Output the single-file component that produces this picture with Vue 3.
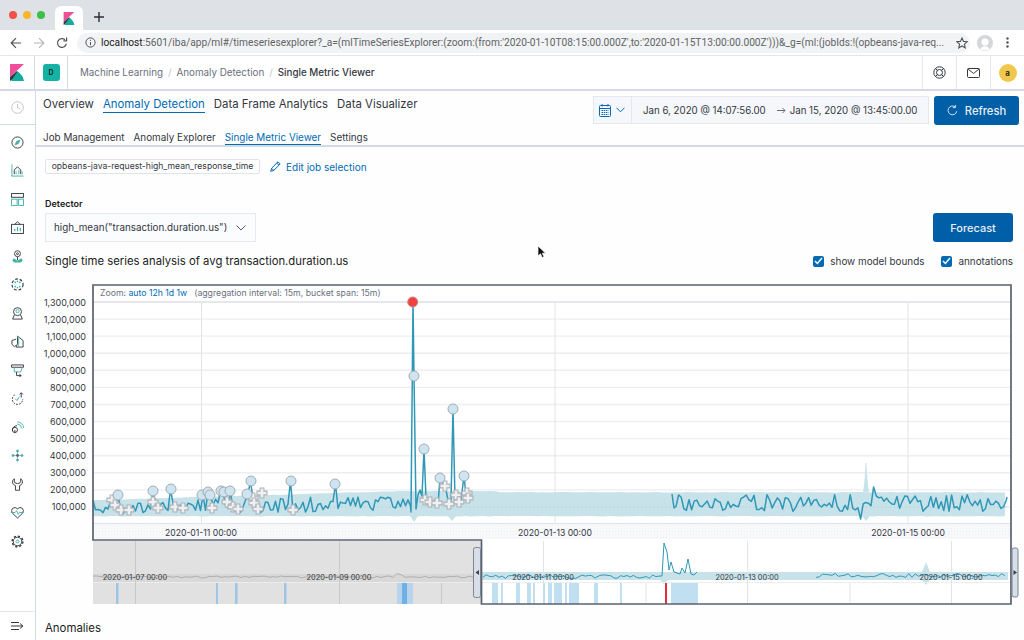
<script setup>
function rng(seed) {
  let s = seed
  return () => {
    s = (s * 16807) % 2147483647
    return s / 2147483647
  }
}
function smooth(pts) {
  return pts.map((p, i) => (i ? 'L' : 'M') + p[0].toFixed(1) + ' ' + p[1].toFixed(1)).join('')
}
const gridY = Array.from({ length: 13 }, (_, i) => 302 + i * 17.08)
const yLabels = ['1,300,000', '1,200,000', '1,100,000', '1,000,000', '900,000', '800,000', '700,000', '600,000', '500,000', '400,000', '300,000', '200,000', '100,000']
  .map((t, i) => ({ t, y: 302 + i * 17.08 + 3.5 }))
const mainDates = [
  { t: '2020-01-11 00:00', x: 201 },
  { t: '2020-01-13 00:00', x: 555 },
  { t: '2020-01-15 00:00', x: 908 }
]
const circles = [[118, 495], [153, 491], [171, 489], [202, 495], [208, 492], [210, 495], [221, 491], [224, 492], [230, 491], [247, 494], [251, 481], [291, 481], [335, 484], [414, 376], [424, 449], [440, 478], [453, 409], [464, 476]]
const crosses = [[112, 500], [115, 505], [121, 510], [129, 510], [153, 502], [158, 508], [175, 507], [183, 508], [212, 508], [227, 502], [233, 507], [238, 509], [253, 498], [262, 493], [254, 503], [258, 509], [293, 510], [425, 500], [430, 502], [437, 503], [445, 486], [449, 504], [456, 495], [459, 502], [467, 493], [468, 498]]

const r1 = rng(4711)
const leftPts = []
for (let x = 93; x < 411; x += 2.5) {
  const hit = circles.find(c => Math.abs(c[0] - x) < 1.3)
  const base = 508 - (x - 93) * 0.012
  leftPts.push([x, hit ? hit[1] : base + (r1() - 0.55) * 15])
}
leftPts.push([411, 512], [413, 302], [414, 376], [416, 509], [418, 495], [420, 490], [422, 496], [424, 449], [426, 498], [428, 502], [431, 500], [435, 505], [438, 505], [440, 478], [443, 484], [446, 490], [449, 505], [451, 500], [453, 409], [455, 500], [458, 497], [461, 500], [464, 476], [466, 495], [471, 498])
const leftLine = smooth(leftPts)

const r2 = rng(90210)
const rightPts = [[672, 494], [674, 508]]
for (let x = 676; x < 1007; x += 2.6) {
  rightPts.push([x, 503 + (r2() - 0.5) * 17])
}
rightPts[Math.floor((866 - 676) / 2.6)][1] = 519
rightPts[Math.floor((880 - 676) / 2.6)][1] = 487
rightPts.push([1007, 497])
const rightLine = smooth(rightPts)

const bandTop = []
const bandBot = []
const r3 = rng(333)
for (let x = 93; x <= 1008; x += 6) {
  const t = x < 400 ? 500 - (x - 93) * 0.03 : x < 500 ? 491 : 492
  bandTop.push([x, t + r3() * 0.5])
  bandBot.push([x, 516 + r3() * 0.4])
}
const band = smooth(bandTop) + bandBot.reverse().map(p => 'L' + p[0] + ' ' + p[1].toFixed(1)).join('') + 'Z'

const r4 = rng(555)
const ctxLeft = []
for (let x = 93; x < 474; x += 4) {
  ctxLeft.push([x, (x > 396 && x < 404 ? 574 : 577) + (r4() - 0.5) * 2])
}
const ctxLeftLine = smooth(ctxLeft)
const ctxA = []
for (let x = 483; x < 660; x += 3.2) ctxA.push([x, 576.5 + (r4() - 0.5) * 4])
ctxA.push([662, 576], [664, 543], [667, 552], [669, 570], [671, 562], [674, 572], [680, 574], [682, 568], [685, 573], [688, 559], [691, 574], [694, 575], [697, 572])
const ctxALine = smooth(ctxA)
const ctxB = []
for (let x = 816; x < 1008; x += 3.2) ctxB.push([x, 575.5 + (r4() - 0.5) * 4])
const ctxBLine = smooth(ctxB)

const greyBars = [[116, 2.5], [216, 2], [235, 2.5], [284, 2.5]]
const blueBars = [[492, 6], [501, 2], [516, 4], [527, 4], [533, 2], [543, 2], [548, 4], [554, 8], [565, 2], [569, 10], [594, 4], [620, 2], [671, 27]]

const crossPath = 'M-1.9 -5H1.9V-1.9H5V1.9H1.9V5H-1.9V1.9H-5V-1.9H-1.9Z'
</script>

<template>
  <div class="screen">
    <div class="tabstrip">
      <div class="lights"><i class="red"></i><i class="amber"></i><i class="green"></i></div>
      <div class="tab">
        <svg width="12" height="13" viewBox="0 0 14 17">
          <polygon points="0,0 14,0 0,13" fill="#f04e98" />
          <polygon points="0,17 0,13 7,7 10,10" fill="#343741" />
          <path d="M1 17H14Q13 11 7.5 7.5Z" fill="#13ada0" />
        </svg>
      </div>
      <svg class="plus" width="10" height="10" viewBox="0 0 10 10"><path d="M5 0V10M0 5H10" stroke="#2b2e33" stroke-width="1.4" /></svg>
    </div>

    <div class="urlbar">
      <svg class="nav-ic" width="12" height="12" viewBox="0 0 12 12" fill="none" stroke="#50545a" stroke-width="1.2"><path d="M11 6H1.5M6 1.2 1.2 6 6 10.8" /></svg>
      <svg class="nav-ic" width="12" height="12" viewBox="0 0 12 12" fill="none" stroke="#b4b7bb" stroke-width="1.2"><path d="M1 6H10.5M6 1.2 10.8 6 6 10.8" /></svg>
      <svg class="nav-ic" width="12" height="12" viewBox="0 0 12 12" fill="none" stroke="#50545a" stroke-width="1.2"><path d="M10.3 6.6A4.4 4.4 0 1 1 9 2.8" /><path d="M10.6 .6V3.8H7.4" /></svg>
      <div class="pill">
        <svg width="11" height="11" viewBox="0 0 11 11" fill="none" stroke="#50545a"><circle cx="5.5" cy="5.5" r="4.6" /><path d="M5.5 5V8.2M5.5 2.8V3.9" /></svg>
        <span class="url"><b>localhost</b>:5601/iba/app/ml#/timeseriesexplorer?_a=(mlTimeSeriesExplorer:(zoom:(from:'2020-01-10T08:15:00.000Z',to:'2020-01-15T13:00:00.000Z')))&amp;_g=(ml:(jobIds:!(opbeans-java-req...</span>
        <svg class="star" width="12" height="12" viewBox="0 0 12 12" fill="none" stroke="#50545a" stroke-width="1.1"><path d="M6 1 7.5 4.4 11.2 4.8 8.4 7.2 9.2 10.9 6 9 2.8 10.9 3.6 7.2 .8 4.8 4.5 4.4Z" /></svg>
      </div>
      <svg class="profile" width="16" height="16" viewBox="0 0 16 16"><circle cx="8" cy="8" r="8" fill="#d5d7da" /><circle cx="8" cy="7" r="3.6" fill="#fff" /><path d="M3 14Q8 8 13 14Q8 17 3 14Z" fill="#fff" /></svg>
      <svg class="kebab" width="3" height="11" viewBox="0 0 3 11"><circle cx="1.5" cy="1.5" r="1.2" fill="#50545a" /><circle cx="1.5" cy="5.5" r="1.2" fill="#50545a" /><circle cx="1.5" cy="9.5" r="1.2" fill="#50545a" /></svg>
    </div>

    <header class="kbn">
      <div class="kbn-logo">
        <svg width="14" height="17" viewBox="0 0 14 17">
          <polygon points="0,0 14,0 0,13" fill="#f04e98" />
          <polygon points="0,17 0,13 7,7 10,10" fill="#343741" />
          <path d="M1 17H14Q13 11 7.5 7.5Z" fill="#13ada0" />
        </svg>
      </div>
      <div class="kbn-space"><span class="space-badge">D</span></div>
      <nav class="crumbs">
        <span>Machine Learning</span><em>/</em><span>Anomaly Detection</span><em>/</em><strong>Single Metric Viewer</strong>
      </nav>
      <div class="kbn-ic">
        <svg width="13" height="13" viewBox="0 0 13 13" fill="none" stroke="#343741"><circle cx="6.5" cy="6.5" r="5.7" /><circle cx="6.5" cy="6.5" r="3" /><path d="M2.4 2.4 4.4 4.4M10.6 2.4 8.6 4.4M2.4 10.6 4.4 8.6M10.6 10.6 8.6 8.6" /></svg>
      </div>
      <div class="kbn-ic">
        <svg width="13" height="10" viewBox="0 0 13 10" fill="none" stroke="#343741"><rect x=".5" y=".5" width="12" height="9" rx="1" /><path d="M1 1 6.5 5.5 12 1" /></svg>
      </div>
      <div class="kbn-ic"><span class="avatar">a</span></div>
    </header>

    <div class="body">
      <aside class="side">
        <div class="side-top">
          <svg width="13" height="13" viewBox="0 0 13 13" fill="none" stroke="#c2c6cc"><circle cx="6.5" cy="6.5" r="5.8" /><path d="M6.5 3V6.8L9 7.6" /></svg>
        </div>
        <div class="side-list">
          <span class="sic"><svg viewBox="0 0 14 14" fill="none" stroke="#343741" stroke-width="1"><circle cx="7" cy="7" r="6" /><path d="M4.5 9.5 6 6 9.5 4.5 8 8Z" stroke="#3fb2a8" fill="#3fb2a8" /></svg></span>
          <span class="sic"><svg viewBox="0 0 14 14" fill="none" stroke="#343741" stroke-width="1"><path d="M1 .5V13" stroke="#3fb2a8" /><path d="M.5 13H13.5" stroke="#3fb2a8" /><path d="M3.5 11V6.5L7 3 10.5 6.5V11" /><path d="M5.5 11V8M8.5 11V6.5M12 11V8" stroke="#3fb2a8" /></svg></span>
          <span class="sic"><svg viewBox="0 0 14 14" fill="none" stroke="#343741" stroke-width="1"><rect x=".6" y=".6" width="12.8" height="4" /><rect x=".6" y="6.6" width="6" height="6.8" stroke="#3fb2a8" /><rect x="8.2" y="6.6" width="5.2" height="6.8" stroke="#3fb2a8" /></svg></span>
          <span class="sic"><svg viewBox="0 0 14 14" fill="none" stroke="#343741" stroke-width="1"><rect x=".6" y="3.6" width="12.8" height="9.8" /><path d="M4 3.6 7 .8 10 3.6" /><path d="M4 11V8.5M7 11V6.5M10 11V7.5" stroke="#3fb2a8" stroke-width="1.3" /></svg></span>
          <span class="sic"><svg viewBox="0 0 14 14" fill="none" stroke="#343741" stroke-width="1"><circle cx="7" cy="4" r="3.2" /><circle cx="7" cy="4" r="1" /><path d="M7 7.4V11" /><path d="M3 9.5Q.5 12 4 13H10Q13.5 12 11 9.5L7 12Z" stroke="#3fb2a8" fill="#3fb2a8" /></svg></span>
          <span class="sic"><svg viewBox="0 0 14 14" fill="none" stroke="#343741" stroke-width="1.2"><circle cx="7" cy="7" r="6" stroke-dasharray="3 2" /><path d="M4.5 4.8H4.6M9.4 4.8H9.5M7 3.5V3.6M7 10.4V10.5M4.5 9.2H4.6M9.4 9.2H9.5" stroke="#3fb2a8" stroke-width="1.8" stroke-linecap="round" /></svg></span>
          <span class="sic"><svg viewBox="0 0 14 14" fill="none" stroke="#343741" stroke-width="1"><circle cx="7" cy="5" r="4.3" /><circle cx="7" cy="4.5" r="1.7" stroke="#3fb2a8" /><path d="M1.8 13H12.2L10.4 8.6M3.6 8.6 1.8 13" /></svg></span>
          <span class="sic"><svg viewBox="0 0 14 14" fill="none" stroke="#343741" stroke-width="1"><path d="M7 1.2 13 6V13H5.2L7 9.5Z" /><path d="M7 1.5C8.5 4 9 9 7.5 13" stroke="#3fb2a8" /><path d="M5.5 4.5 1 6V10L3.5 12.5 5 11" /></svg></span>
          <span class="sic"><svg viewBox="0 0 14 14" fill="none" stroke="#343741" stroke-width="1"><path d="M.6 1H13.4V3.5H.6Z" /><path d="M3.5 4V8.5H10.5L12 4" stroke="#3fb2a8" /><path d="M6 8.5V12.5H11" stroke="#343741" /><path d="M9 11 11 12.5 9 13.8" /></svg></span>
          <span class="sic"><svg viewBox="0 0 14 14" fill="none" stroke="#343741" stroke-width="1"><path d="M4 3A5.6 5.6 0 1 0 12.6 7.5" stroke-dasharray="2 1.2" /><path d="M4.4 7.2 6.4 9.2 9 5" stroke="#3fb2a8" /><path d="M11 6V1M9.2 2.6 11 .8 12.8 2.6" /></svg></span>
          <span class="sic"><svg viewBox="0 0 14 14" fill="none" stroke="#343741" stroke-width="1"><circle cx="4.2" cy="9.6" r="2.8" /><path d="M1.5 10A5 5 0 0 1 6.5 5M4.2 9.6V13" /><path d="M6.5 3A6 6 0 0 1 11.5 8M7 .8A8 8 0 0 1 13.6 7.5" stroke="#3fb2a8" /></svg></span>
          <span class="sic"><svg viewBox="0 0 14 14" fill="none" stroke="#3fb2a8" stroke-width=".8"><path d="M7 1V13M1 7H13" stroke="#6b7280" stroke-width=".6" /><circle cx="7" cy="2.2" r="1.1" fill="#3fb2a8" /><circle cx="7" cy="11.8" r="1.1" fill="#3fb2a8" /><circle cx="2.2" cy="7" r="1.1" fill="#3fb2a8" /><circle cx="11.8" cy="7" r="1.1" fill="#3fb2a8" /><circle cx="7" cy="7" r="1.5" fill="#5a606c" stroke="none" /></svg></span>
          <span class="sic"><svg viewBox="0 0 14 14" fill="none" stroke="#343741" stroke-width="1"><path d="M3.6 .8V3.5Q3.6 6 7 6T10.4 3.5V.8Q13 2.5 12.2 5.5 11.4 7.6 9.2 8.2V13.2H4.8V8.2Q2.6 7.6 1.8 5.5 1 2.5 3.6 .8Z" /></svg></span>
          <span class="sic"><svg viewBox="0 0 14 14" fill="none" stroke="#343741" stroke-width="1"><path d="M7 13 1.8 8Q-.5 5 1.6 2.6 4.5 .3 7 3 9.5 .3 12.4 2.6 14.5 5 12.2 8Z" /><path d="M0 7H4.5L6 5 7.8 9 9.2 7H14" stroke="#3fb2a8" /></svg></span>
          <span class="sic"><svg viewBox="0 0 14 14" fill="none" stroke="#343741"><circle cx="7" cy="7" r="4.6" stroke-width="1" /><circle cx="7" cy="7" r="5.8" stroke-width="1.5" stroke-dasharray="2.4 2.1" /><circle cx="7" cy="7" r="1.6" stroke="#3fb2a8" stroke-width="1" /></svg></span>
        </div>
        <div class="side-end">
          <svg width="13" height="10" viewBox="0 0 13 10" fill="none" stroke="#343741"><path d="M0 1.5H8M0 5H11.5M0 8.5H8M9 2.5 12 5 9 7.5" /></svg>
        </div>
      </aside>

      <main class="main">
        <div class="toprow">
          <div class="tabs">
            <a>Overview</a><a class="on">Anomaly Detection</a><a>Data Frame Analytics</a><a>Data Visualizer</a>
          </div>
          <div class="dates">
            <div class="date-quick">
              <svg width="12" height="13" viewBox="0 0 12 13" fill="none" stroke="#006bb4"><rect x=".5" y="1.5" width="11" height="11" rx="1" /><path d="M.5 4.5H11.5M3 0V2.5M9 0V2.5" /><path d="M2.5 6.5H9.5M2.5 8.5H9.5M2.5 10.5H9.5" stroke-dasharray="1.5 .7" /></svg>
              <svg width="9" height="6" viewBox="0 0 9 6" fill="none" stroke="#006bb4"><path d="M.5 .8 4.5 4.8 8.5 .8" /></svg>
            </div>
            <div class="date-range">
              <span>Jan 6, 2020 @ 14:07:56.00</span>
              <svg class="date-arrow" width="9" height="7" viewBox="0 0 9 7" fill="none" stroke="#69707d"><path d="M0 3.5H8M5.5 1 8 3.5 5.5 6" /></svg>
              <span>Jan 15, 2020 @ 13:45:00.00</span>
            </div>
          </div>
          <button class="refresh">
            <svg width="11" height="11" viewBox="0 0 11 11" fill="none" stroke="#d5e3f0"><path d="M9.8 6.2A4.4 4.4 0 1 1 8 1.8" /><path d="M8.4 0V2.6H5.8" /></svg>
            Refresh
          </button>
        </div>

        <div class="subtabs">
          <a>Job Management</a><a>Anomaly Explorer</a><a class="on">Single Metric Viewer</a><a>Settings</a>
        </div>

        <div class="jobrow">
          <span class="job">opbeans-java-request-high_mean_response_time</span>
          <a class="edit">
            <svg width="11" height="11" viewBox="0 0 11 11" fill="none" stroke="#006bb4"><path d="M.7 10.3 1.6 7.2 8 .8 10.2 3 3.8 9.4ZM1.6 7.2 3.8 9.4M6.8 2 9 4.2" /></svg>
            Edit job selection
          </a>
        </div>

        <div class="formrow">
          <div>
            <label class="lbl">Detector</label>
            <div class="select">
              <span>high_mean("transaction.duration.us")</span>
              <svg width="10" height="6" viewBox="0 0 10 6" fill="none" stroke="#535966"><path d="M.5 .5 5 5 9.5 .5" /></svg>
            </div>
          </div>
          <button class="forecast">Forecast</button>
        </div>

        <div class="titlerow">
          <h2>Single time series analysis of avg transaction.duration.us</h2>
          <label class="chk"><i><svg width="9" height="8" viewBox="0 0 9 8" fill="none" stroke="#fff" stroke-width="1.4"><path d="M1 4 3.4 6.4 8 1" /></svg></i>show model bounds</label>
          <label class="chk"><i><svg width="9" height="8" viewBox="0 0 9 8" fill="none" stroke="#fff" stroke-width="1.4"><path d="M1 4 3.4 6.4 8 1" /></svg></i>annotations</label>
        </div>

        <svg class="chart" width="988" height="326" viewBox="36 284 988 326">
          <defs>
            <pattern id="dots" width="3" height="3" patternUnits="userSpaceOnUse">
              <rect width="3" height="3" fill="#f8f9fb" />
              <rect width="1" height="1" fill="#eceef3" />
            </pattern>
          </defs>
          <rect x="93" y="285" width="918" height="238" fill="#fff" />
          <g stroke="#eceef1" stroke-width="1.4">
            <line v-for="y in gridY" :key="y" x1="93" x2="1011" :y1="y" :y2="y" />
          </g>
          <line x1="93" x2="1011" y1="302" y2="302" stroke="#d9dde3" />
          <g stroke="#e1e4e9">
            <line x1="201.5" x2="201.5" y1="302" y2="523" />
            <line x1="555" x2="555" y1="302" y2="523" />
            <line x1="908" x2="908" y1="302" y2="523" />
          </g>
          <path :d="band" fill="#c8e2ea" />
          <path d="M863 492Q865 480 865.5 463H866.5Q867 480 869 492ZM862 516 866 521 870 516ZM410 516 414 522 418 516ZM448 516 452 521 456 516Z" fill="#c8e2ea" />
          <line x1="93" x2="1008" y1="507" y2="507" stroke="#b6d3dc" stroke-dasharray="2 2" stroke-width=".8" />
          <rect x="93" y="523" width="918" height="16" fill="url(#dots)" />
          <line x1="93" x2="1011" y1="523.5" y2="523.5" stroke="#dfe3e9" />

          <g class="axis">
            <text v-for="l in yLabels" :key="l.t" x="86" :y="l.y" text-anchor="end">{{ l.t }}</text>
          </g>
          <text class="zoomtxt" x="100" y="295.5">Zoom: <tspan class="lnk">auto 12h 1d 1w</tspan><tspan dx="7">(aggregation interval: 15m, bucket span: 15m)</tspan></text>
          <g class="axis2">
            <text v-for="d in mainDates" :key="d.t" :x="d.x" y="536" text-anchor="middle">{{ d.t }}</text>
          </g>

          <path :d="leftLine" fill="none" stroke="#3098b7" stroke-width="1.5" stroke-linejoin="round" />
          <path :d="rightLine" fill="none" stroke="#3098b7" stroke-width="1.5" stroke-linejoin="round" />

          <g>
            <path v-for="(c, i) in crosses" :key="i" :d="crossPath" :transform="`translate(${c[0]} ${c[1]})`" fill="#eff0f2" stroke="#aeb2b8" stroke-width="1.1" />
            <circle v-for="(c, i) in circles" :key="'c' + i" :cx="c[0]" :cy="c[1]" r="5" fill="#cde4f1" stroke="#a6abb2" stroke-width="1" />
            <circle cx="412.7" cy="302" r="5" fill="#f4403f" stroke="#bf8b8c" />
          </g>

          <!-- context chart -->
          <rect x="93" y="541" width="388" height="63" fill="#e1e1e1" />
          <rect x="93" y="574" width="381" height="8" fill="#d8d8d8" />
          <rect x="482" y="541" width="529" height="63" fill="#fff" />
          <rect x="482" y="572" width="526" height="8" fill="#c8e2ea" />
          <path d="M922 572 926 562 930 572ZM922 580 926 585 930 580ZM660 580 664 584 668 580Z" fill="#c8e2ea" />
          <line x1="482" x2="1011" y1="582.5" y2="582.5" stroke="#eceef1" />
          <line x1="93" x2="474" y1="582.5" y2="582.5" stroke="#ececec" />
          <g stroke="#c9c9c9">
            <line x1="135.5" x2="135.5" y1="541" y2="604" />
            <line x1="339.5" x2="339.5" y1="541" y2="604" />
            <line x1="441.5" x2="441.5" y1="583" y2="604" />
          </g>
          <g stroke="#e1e4e9">
            <line x1="543.5" x2="543.5" y1="541" y2="604" />
            <line x1="747.5" x2="747.5" y1="541" y2="604" />
            <line x1="951.5" x2="951.5" y1="541" y2="604" />
            <line x1="646" x2="646" y1="583" y2="604" />
            <line x1="850" x2="850" y1="583" y2="604" />
          </g>
          <rect v-for="b in blueBars" :key="b[0]" :x="b[0]" y="583" :width="b[1]" height="21" fill="#c0dff0" />
          <rect x="665" y="583" width="2" height="21" fill="#e0323c" />
          <rect v-for="b in greyBars" :key="'g' + b[0]" :x="b[0]" y="583" :width="b[1]" height="21" fill="#9cc5e6" />
          <rect x="397" y="583" width="16" height="21" fill="#b8d4ec" />
          <rect x="402" y="583" width="5" height="21" fill="#6fb0e6" />
          <path :d="ctxLeftLine" fill="none" stroke="#a9a9a9" stroke-width=".9" />
          <path :d="ctxALine" fill="none" stroke="#3098b7" stroke-width="1" />
          <path :d="ctxBLine" fill="none" stroke="#3098b7" stroke-width="1" />
          <g class="axis3">
            <text x="135" y="580" text-anchor="middle">2020-01-07 00:00</text>
            <text x="339" y="580" text-anchor="middle">2020-01-09 00:00</text>
            <text x="543" y="580" text-anchor="middle">2020-01-11 00:00</text>
            <text x="747" y="580" text-anchor="middle">2020-01-13 00:00</text>
            <text x="951" y="580" text-anchor="middle">2020-01-15 00:00</text>
          </g>

          <path d="M93 285H1011V604H481.5V540H93Z" fill="none" stroke="#5a6170" stroke-width="1.7" />

          <g fill="#d8dee8" stroke="#7d8594">
            <rect x="473.5" y="547.5" width="7" height="50" rx="2" />
            <rect x="1012" y="548" width="6" height="49" rx="2" />
          </g>
          <path d="M479 570V575L475.5 572.5Z" fill="#3a3f4a" />
          <path d="M1013.5 570V575L1017 572.5Z" fill="#3a3f4a" />
        </svg>

        <h3 class="anom">Anomalies</h3>
      </main>
    </div>

    <svg class="cursor" width="10" height="14" viewBox="0 0 10 14"><path d="M1 1V11L3.5 8.8 5.2 12.6 7 11.8 5.3 8.2H8.6Z" fill="#111" stroke="#fff" stroke-width=".7" /></svg>
  </div>
</template>

<style>
html, body { margin: 0; background: #fff; }
</style>

<style scoped>
.screen {
  position: relative;
  width: 1024px;
  height: 640px;
  overflow: hidden;
  display: flex;
  flex-direction: column;
  background: #fefefe;
  font-family: Inter, "Liberation Sans", sans-serif;
  color: #343741;
}
.tabstrip {
  height: 30px;
  flex: none;
  display: flex;
  align-items: flex-end;
  background: #dee1e6;
  box-sizing: border-box;
}
.lights { display: flex; gap: 6px; padding: 0 0 11px 9px; width: 55px; box-sizing: border-box; }
.lights i { width: 8px; height: 8px; border-radius: 50%; flex: none; }
.red { background: #f4504c; }
.amber { background: #f8b52e; }
.green { background: #3cc048; }
.tab {
  width: 28px;
  height: 24px;
  background: #fff;
  border-radius: 6px 6px 0 0;
  display: flex;
  align-items: center;
  justify-content: center;
}
.plus { margin: 0 0 8px 11px; }
.urlbar {
  height: 25px;
  flex: none;
  display: flex;
  align-items: center;
  background: #fff;
  border-bottom: 1px solid #e4e6ea;
  padding-left: 10px;
  gap: 11px;
}
.nav-ic { flex: none; }
.pill {
  width: 893px;
  height: 20px;
  margin-left: -2px;
  flex: none;
  border-radius: 10px;
  background: #f1f3f4;
  display: flex;
  align-items: center;
  padding-left: 8px;
  box-sizing: border-box;
  gap: 5px;
}
.url {
  font: 10.2px Roboto, "Liberation Sans", sans-serif;
  color: #5f6368;
  white-space: nowrap;
  width: 846px;
  flex: none;
}
.url b { font-weight: 400; color: #202124; }
.star { flex: none; margin-left: 4px; }
.profile { margin-left: -4px; flex: none; }
.kebab { margin-left: 2px; flex: none; }
.kbn {
  height: 33px;
  flex: none;
  display: flex;
  background: #fff;
  border-bottom: 2px solid #d3dae6;
}
.kbn-logo { width: 34px; border-right: 1px solid #d3dae6; display: flex; align-items: center; justify-content: center; }
.kbn-space { width: 32px; border-right: 1px solid #d3dae6; display: flex; align-items: center; justify-content: center; }
.space-badge {
  width: 17px;
  height: 17px;
  border-radius: 3px;
  background: #14b2a4;
  color: #1a1c21;
  font-size: 7px;
  font-weight: 600;
  display: flex;
  align-items: center;
  justify-content: center;
}
.crumbs {
  flex: 1;
  display: flex;
  align-items: center;
  gap: 5px;
  padding-left: 12px;
  font-size: 9.8px;
  color: #69707d;
}
.crumbs em { font-style: normal; color: #c2c7cf; }
.crumbs strong { font-weight: 500; color: #343741; }
.kbn-ic {
  width: 34px;
  box-sizing: border-box;
  border-left: 1px solid #e3e7ee;
  display: flex;
  align-items: center;
  justify-content: center;
}
.avatar {
  width: 18px;
  height: 18px;
  border-radius: 50%;
  background: #f1c84c;
  color: #1a1c21;
  font-size: 8px;
  font-weight: 600;
  display: flex;
  align-items: center;
  justify-content: center;
}
.body { flex: 1; display: flex; min-height: 0; }
.side {
  width: 35px;
  flex: none;
  border-right: 1px solid #d3dae6;
  background: #fff;
  display: flex;
  flex-direction: column;
  align-items: stretch;
}
.side-top {
  height: 33px;
  flex: none;
  border-bottom: 1px solid #d3dae6;
  display: flex;
  align-items: center;
  justify-content: center;
}
.side-list { display: grid; grid-auto-rows: 28.5px; padding-top: 2.75px; }
.sic { display: flex; align-items: center; justify-content: center; }
.sic svg { width: 13px; height: 13px; }
.side-end {
  margin-top: auto;
  height: 28px;
  border-top: 1px solid #e6e9ef;
  display: flex;
  align-items: center;
  justify-content: center;
}
.main { flex: 1; min-width: 0; display: flex; flex-direction: column; }
.toprow {
  height: 39px;
  flex: none;
  display: flex;
  align-items: flex-start;
  padding: 5px 5px 0 7px;
  box-sizing: border-box;
}
.tabs { display: flex; gap: 9px; flex: 1; font-size: 11.4px; line-height: 15px; padding-top: 1px; }
.tabs a { height: 15px; }
.tabs a.on { color: #006bb4; border-bottom: 1px solid #006bb4; }
.dates {
  width: 336px;
  height: 28px;
  flex: none;
  display: flex;
  background: #f5f7fa;
  box-shadow: 0 0 0 1px #e3e8ef inset;
  font-size: 9.7px;
  box-sizing: border-box;
}
.date-quick {
  width: 39px;
  flex: none;
  box-sizing: border-box;
  display: flex;
  align-items: center;
  justify-content: center;
  gap: 5px;
  border-right: 1px solid #e3e8ef;
}
.date-range { flex: 1; display: flex; align-items: center; padding-left: 11px; white-space: nowrap; }
.date-arrow { margin: 0 4px 0 11px; flex: none; }
.refresh {
  width: 85px;
  height: 29px;
  margin-left: 5px;
  flex: none;
  border: 0;
  border-radius: 3px;
  background: #005fa6;
  color: #e8eef5;
  font: 500 11.2px Inter, sans-serif;
  display: flex;
  align-items: center;
  justify-content: center;
  gap: 7px;
  padding: 0;
}
.subtabs {
  height: 15px;
  flex: none;
  display: flex;
  gap: 9px;
  padding-left: 7px;
  font-size: 9.9px;
  line-height: 15px;
  border-bottom: 2px solid #d3dae6;
}
.subtabs a { height: 14px; }
.subtabs a.on { color: #006bb4; border-bottom: 1px solid #006bb4; }
.jobrow {
  display: flex;
  align-items: center;
  flex: none;
  padding: 12px 0 0 9px;
  gap: 10px;
}
.job {
  height: 15px;
  width: 215px;
  box-sizing: border-box;
  border: 1px solid #e0e4ea;
  border-radius: 2px;
  font-size: 8.6px;
  line-height: 13px;
  text-align: center;
  white-space: nowrap;
}
.edit { color: #006bb4; font-size: 10px; display: flex; align-items: center; gap: 5px; }
.formrow {
  display: flex;
  justify-content: space-between;
  align-items: flex-end;
  flex: none;
  padding: 24px 11px 0 9px;
}
.lbl { display: block; font-size: 9px; font-weight: 600; line-height: 12px; margin-bottom: 3px; color: #1a1c21; }
.select {
  width: 211px;
  height: 29px;
  box-sizing: border-box;
  padding: 0 10px 0 9px;
  background: #fbfcfd;
  box-shadow: 0 0 0 1px #e6e9ef inset;
  display: flex;
  align-items: center;
  justify-content: space-between;
  font-size: 9.8px;
  white-space: nowrap;
}
.forecast {
  width: 80px;
  height: 29px;
  border: 0;
  border-radius: 3px;
  background: #005fa6;
  color: #e8eef5;
  font: 500 11px Inter, sans-serif;
  padding: 0;
}
.titlerow {
  display: flex;
  align-items: center;
  flex: none;
  height: 20px;
  margin-top: 9px;
  padding: 0 11px 0 9px;
  font-size: 9.9px;
}
.titlerow h2 { flex: 1; margin: 0; font-size: 11.3px; font-weight: 400; color: #1a1c21; }
.chk { display: flex; align-items: center; gap: 6px; margin-left: 17px; }
.chk i {
  width: 11px;
  height: 11px;
  border-radius: 2px;
  background: #006bb4;
  display: flex;
  align-items: center;
  justify-content: center;
}
.chart { display: block; flex: none; margin-top: 13px; }
.axis text { font-size: 9px; fill: #343741; }
.axis2 text { font-size: 8.65px; fill: #343741; }
.axis3 text { font-size: 7.4px; fill: #343741; }
.zoomtxt { font-size: 8.7px; fill: #69707d; }
.lnk { fill: #006bb4; }
.anom { margin: 10px 0 0 9px; font-size: 11.4px; font-weight: 400; color: #1a1c21; line-height: 16px; }
.cursor { position: absolute; left: 537px; top: 245px; }
</style>
